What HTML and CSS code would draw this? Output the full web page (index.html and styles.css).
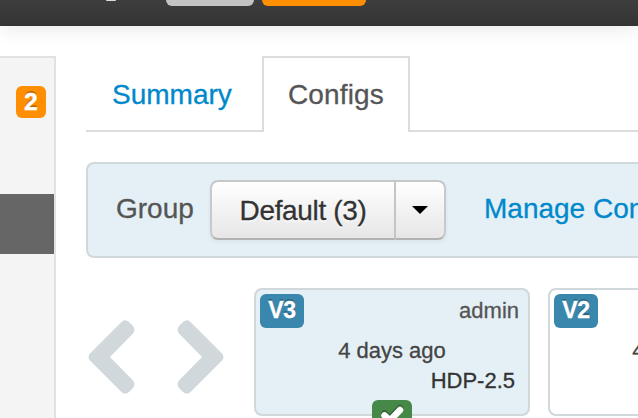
FILE: index.html
```html
<!DOCTYPE html>
<html lang="en">
<head>
<meta charset="utf-8">
<title>Configs</title>
<link rel="stylesheet" href="styles.css">
</head>
<body>
<header class="navbar">
  <span class="brand-tail"></span>
  <span class="nav-label nav-label-muted"></span>
  <span class="nav-label nav-label-alert"></span>
</header>
<div class="layout">
  <aside class="sidebar">
    <span class="count">2</span>
    <div class="selected"></div>
  </aside>
  <main class="content">
    <nav class="tabs">
      <a class="tab">Summary</a>
      <a class="tab active">Configs</a>
    </nav>
    <section class="group-bar">
      <span class="group-name">Group</span>
      <div class="btn-group">
        <button class="btn btn-main">Default (3)</button>
        <button class="btn btn-toggle" aria-label="Toggle"><span class="caret"></span></button>
      </div>
      <a class="manage">Manage Con</a>
    </section>
    <section class="versions">
      <svg class="chevron" viewBox="0 0 48 76"><path d="M1.500 35 34 2.500Q37.500 0 41 3L45 7Q48 11 45 14.500L22 38 45 61.500Q48 65 45 69L41 73Q37.500 76 34 73.500L1.500 41Q-.5 38 1.500 35Z"/></svg>
      <svg class="chevron chevron-next" viewBox="0 0 48 76"><path transform="matrix(-1 0 0 1 48 0)" d="M1.500 35 34 2.500Q37.500 0 41 3L45 7Q48 11 45 14.500L22 38 45 61.500Q48 65 45 69L41 73Q37.500 76 34 73.500L1.500 41Q-.5 38 1.500 35Z"/></svg>
      <article class="card current">
        <div class="card-head"><span class="version">V3</span><span class="author">admin</span></div>
        <div class="age">4 days ago</div>
        <div class="stack">HDP-2.5</div>
        <span class="check"><svg viewBox="0 0 40 34"><path d="M12.500 15.500l5.500 5L28 10"/></svg></span>
      </article>
      <article class="card">
        <div class="card-head"><span class="version">V2</span></div>
        <div class="age">4 days ago</div>
      </article>
    </section>
  </main>
</div>
</body>
</html>
```

FILE: styles.css
```css
* { box-sizing: border-box; }

body {
  margin: 0;
  height: 418px;
  overflow: hidden;
  background: #fff;
  color: #555;
  font: 28px/40px "Liberation Sans", Arial, sans-serif;
  -webkit-text-stroke: .3px;
}

.navbar {
  display: flex;
  align-items: flex-start;
  height: 26px;
  padding-left: 106px;
  background: linear-gradient(#3e3e3e, #333);
  box-shadow: 0 2px 20px rgba(0, 0, 0, .1);
}
.brand-tail {
  width: 10px;
  height: 1px;
  margin-right: 50px;
  background: #ddd;
  border-radius: 0 0 5px 5px;
}
.nav-label { height: 6px; border-radius: 0 0 6px 6px; }
.nav-label-muted { width: 88px; margin-right: 8px; background: #c3c3c3; }
.nav-label-alert { width: 104px; background: #ff8e00; }

.layout {
  display: flex;
  height: 362px;
  margin-top: 30px;
  overflow: hidden;
}
.sidebar {
  flex: none;
  width: 56px;
  margin-right: 30px;
  padding-top: 28px;
  border: solid #e2e2e2;
  border-width: 2px 2px 0 0;
  background: #f4f4f4;
}
.count {
  display: block;
  width: 30px;
  height: 32px;
  margin-left: 16px;
  border-radius: 6px;
  background: #ff8e00;
  color: #fff;
  font-size: 24px;
  font-weight: bold;
  line-height: 31px;
  text-align: center;
  text-shadow: 0 -2px 0 rgba(0, 0, 0, .25);
  -webkit-text-stroke: .6px;
}
.selected { height: 60px; margin-top: 76px; background: #666; }

.content { flex: 1; min-width: 0; }
.tabs {
  display: flex;
  height: 76px;
  margin-bottom: 30px;
  background: linear-gradient(#ddd, #ddd) bottom / 100% 2px no-repeat;
}
.tab {
  width: 176px;
  padding: 19px 0 0 26px;
  color: #08c;
}
.tab.active {
  width: 148px;
  padding: 17px 0 0 24px;
  border: 2px solid #ddd;
  border-bottom: 0;
  background: #fff;
  color: #555;
  letter-spacing: .15px;
}

.group-bar {
  display: flex;
  align-items: flex-start;
  height: 96px;
  padding: 16px 0 0 28px;
  border: 2px solid #d0d8db;
  border-right: 0;
  border-radius: 8px 0 0 8px;
  background: #e4f0f5;
}
.group-name { flex: none; width: 94px; padding-top: 9px; }
.btn-group { display: flex; flex: none; width: 236px; margin-right: 38px; }
.btn {
  height: 60px;
  padding: 1px 0 0;
  border: 2px solid #c8c8cb;
  border-bottom-color: #b3b3b3;
  background: linear-gradient(#fff, #e6e6e6) padding-box;
  box-shadow: 0 2px 4px rgba(0, 0, 0, .05);
  color: #333;
  font: inherit;
  letter-spacing: -.35px;
  text-shadow: 0 2px 2px rgba(255, 255, 255, .75);
  -webkit-text-stroke: .3px;
}
.btn-main { width: 186px; border-radius: 8px 0 0 8px; }
.btn-toggle {
  display: flex;
  align-items: center;
  justify-content: center;
  width: 50px;
  padding: 0;
  border-left: 0;
  border-radius: 0 8px 8px 0;
}
.caret {
  border: solid transparent;
  border-width: 8px 8px 0;
  border-top-color: #000;
}
.manage { padding-top: 9px; color: #08c; white-space: nowrap; }

.versions { display: flex; margin-top: 30px; }
.chevron {
  flex: none;
  width: 48px;
  height: 76px;
  margin: 31px 0 0 2px;
  fill: #d0d8db;
}
.chevron-next { margin: 31px 30px 0 40px; }
.card {
  position: relative;
  flex: none;
  width: 276px;
  height: 128px;
  margin-right: 18px;
  padding: 4px;
  border: 2px solid #d0d8db;
  border-radius: 8px;
  font-size: 22px;
  line-height: 30px;
}
.current { background: #e4f0f5; }
.card-head { display: flex; justify-content: space-between; height: 42px; }
.version {
  width: 44px;
  height: 34px;
  border-radius: 6px;
  background: #3a87ad;
  color: #fff;
  font-size: 23px;
  font-weight: bold;
  letter-spacing: -.4px;
  line-height: 32px;
  text-align: center;
  text-shadow: 0 -2px 0 rgba(0, 0, 0, .25);
}
.author { padding: 2px 5px 0 0; }
.age { color: #444; text-align: center; }
.stack { padding-right: 9px; color: #333; text-align: right; }
.check {
  position: absolute;
  top: 110px;
  left: 116px;
  width: 40px;
  height: 34px;
  border-radius: 6px;
  background: #468847;
}
.check svg {
  display: block;
  fill: none;
  stroke: #fff;
  stroke-width: 6.5;
  stroke-linecap: round;
  filter: drop-shadow(0 -2px 0 rgba(0, 0, 0, .25));
}
```
